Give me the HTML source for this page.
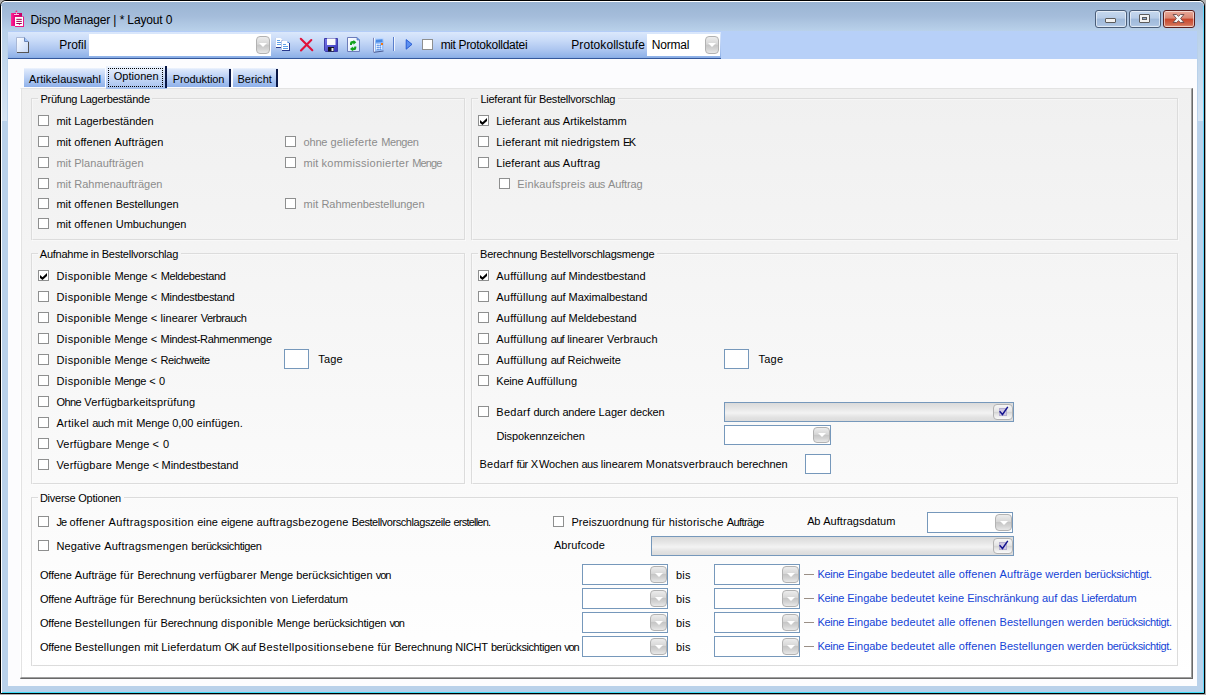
<!DOCTYPE html>
<html lang="de"><head><meta charset="utf-8"><title>Dispo Manager</title>
<style>
html,body{margin:0;padding:0}
body{width:1206px;height:695px;overflow:hidden;background:#b0b0b0;position:relative;font-family:"Liberation Sans",sans-serif}
*{box-sizing:border-box}
.a{position:absolute}
.tx{position:absolute;white-space:pre;line-height:16px;height:16px}
.w{display:inline-block;white-space:pre;overflow:visible;vertical-align:top}
.win{position:absolute;left:0;top:0;width:1205px;height:694px;background:#b9d1ea;border:1px solid #000;border-radius:6px 6px 0 0;overflow:hidden}
.cb{position:absolute;width:11px;height:11px;border:1px solid #8e8f8f;background:#fff}
.gl{position:absolute;background:#dcdcdc;box-shadow:1px 1px 0 rgba(255,255,255,.4)}
.inp{position:absolute;background:#fff;border:1px solid #7698bb}
.dd{position:absolute;border:1px solid #b2b2b2;border-radius:4px;background:linear-gradient(#ececec,#d6d6d6 46%,#c6c6c6 50%,#d4d4d4 75%,#e8e8e8)}
.dd i{position:absolute;left:50%;top:50%;margin:-2px 0 0 -4px;width:0;height:0;border-left:4px solid transparent;border-right:4px solid transparent;border-top:4px solid #fff}
.ck{position:absolute;border:1px solid #b2b2b2;border-radius:4px;background:linear-gradient(#f6f6f6,#e4e4e4 46%,#d2d2d2 50%,#e6e6e6 70%,#fafafa)}
.tab{position:absolute;background:linear-gradient(#f0f5fd,#dde8fb 8%,#b9cff4 50%,#8fb1ea)}
</style></head><body>

<div class="win"></div>
<div class="a" style="left:1px;top:1px;width:1203px;height:30px;background:linear-gradient(#9ab4d3,#a5bddb 50%,#b9d1ea);border-radius:5px 5px 0 0;border-top:1px solid #fff"></div>
<div class="a" style="left:1px;top:6px;width:1px;height:687px;background:#fff"></div>
<div class="a" style="left:1203px;top:6px;width:1px;height:687px;background:#5fd6fb"></div>
<div class="a" style="left:2px;top:692px;width:1202px;height:1px;background:#3fdcf7"></div>
<div class="a" style="left:2px;top:31px;width:5px;height:90px;background:linear-gradient(rgba(255,255,255,0),rgba(255,255,255,.42))"></div>
<div class="a" style="left:1198px;top:31px;width:5px;height:90px;background:linear-gradient(rgba(255,255,255,0),rgba(255,255,255,.42))"></div>
<div class="a" style="left:8px;top:31px;width:1189px;height:655px;background:#fcfcfe"></div>
<div class="a" style="left:8px;top:31px;width:1189px;height:28px;background:#b7d0f8"></div>
<div class="a" style="left:8px;top:31px;width:713px;height:28px;background:#b4cdf8;border-radius:3px 0 0 0"></div>
<div class="a" style="left:8px;top:32px;width:713px;height:27px;background:linear-gradient(#dbe8fc 0,#c9dbf8 30%,#adc6f0 65%,#8fb2e8 92.600%,#86aae4 96.200%,#34589b 96.400%,#34589b 100%)"></div>
<div class="a" style="left:89px;top:34px;width:182px;height:22px;background:#fff"></div>
<div class="dd" style="left:256px;top:36px;width:14px;height:18px"><i></i></div>
<div class="a" style="left:647px;top:34px;width:73px;height:22px;background:#fff"></div>
<div class="dd" style="left:705px;top:36px;width:14px;height:18px"><i></i></div>
<div class="cb" style="left:422px;top:39px"></div>
<svg class="a" style="left:15px;top:36px" width="16" height="18" viewBox="0 0 16 18"><defs><linearGradient id="pg" x1="0" y1="0" x2="1" y2="1"><stop offset="0" stop-color="#fff"/><stop offset="1" stop-color="#c5d8f8"/></linearGradient></defs><path d="M1.500 1.500h8l4 4v11h-12z" fill="url(#pg)" stroke="#a9b8d6" stroke-width="1"/><path d="M9.500 1.500v4h4" fill="#9cc4ff" stroke="#6d86b5" stroke-width="1"/><path d="M2 16.500h12M13.500 6v10.500" stroke="#555" stroke-width="1" fill="none"/></svg>
<svg class="a" style="left:275px;top:38px" width="16" height="14" viewBox="0 0 16 14"><path d="M.5 0h5l2 2v8h-7z" fill="#fff"/><path d="M.5 0v10" stroke="#c5d3ee" fill="none"/><path d="M1 9.500h6M7 2.500v7" stroke="#2a3b8f" fill="none"/><path d="M2 2.500h3M2 4.500h4M2 6.500h4" stroke="#5fa0e8"/><path d="M6.500 3h6l2 2v8h-8z" fill="#fff"/><path d="M6.500 3v10" stroke="#b5c7ea" fill="none"/><path d="M12.500 3l2 2h-2z" fill="#3d7fe0"/><path d="M7 12.500h8M14.500 5v8" stroke="#2a3b8f" fill="none"/><path d="M8 6.500h3M8 8.500h5M8 10.500h5" stroke="#5fa0e8"/></svg>
<svg class="a" style="left:299px;top:37px" width="15" height="15" viewBox="0 0 15 15"><path d="M1.800 1.800L13.300 13.200M12.300 3L2 13.500" stroke="#e0123a" stroke-width="2.100" stroke-linecap="round"/></svg>
<svg class="a" style="left:324px;top:38px" width="14" height="14" viewBox="0 0 14 14"><defs><linearGradient id="fl" x1="0" y1="0" x2="1" y2="1"><stop offset="0" stop-color="#7a7ae8"/><stop offset="1" stop-color="#3434b8"/></linearGradient></defs><path d="M.5.5h13v13h-12l-1-1z" fill="url(#fl)" stroke="#3c3ca8"/><rect x="3" y=".5" width="8.500" height="6.500" fill="#fafafa"/><rect x="4" y="9" width="6" height="4.500" fill="#16161e"/><rect x="7.500" y="10" width="2" height="3" fill="#f0f0f0"/></svg>
<svg class="a" style="left:347px;top:37px" width="14" height="15" viewBox="0 0 14 15"><defs><linearGradient id="rf" x1="0" y1="0" x2="1" y2="1"><stop offset="0" stop-color="#fff"/><stop offset="1" stop-color="#d4e4fc"/></linearGradient></defs><path d="M.5.5h9.500l2.500 2.500v11.500h-12z" fill="url(#rf)" stroke="#6d7cba"/><path d="M10 .5v2.500h2.500" fill="#4a9af0" stroke="#6d7cba" stroke-width=".8"/><path d="M3 8V6.200Q3 4 5.500 4H6.500V3L9.300 5.300L6.500 7.800V6.500H5.500Q5 6.500 5 7.200V8z" fill="#12a21c"/><path d="M9.300 9.500v1.600Q9.300 13.300 6.800 13.300H5.800v1L3 12L5.800 9.500v1.300h1Q7.300 10.800 7.300 10.100V9.500z" fill="#12a21c"/></svg>
<svg class="a" style="left:373px;top:37px" width="12" height="16" viewBox="0 0 12 16"><defs><linearGradient id="ca" x1="0" y1="0" x2="0" y2="1"><stop offset="0" stop-color="#cfe2ff"/><stop offset=".3" stop-color="#8cb8f6"/><stop offset="1" stop-color="#9fc2f6"/></linearGradient></defs><path d="M.5.800L10.500.2V14.200L.5 15.500z" fill="url(#ca)"/><path d="M.5.800V15.500" stroke="#8088b8"/><path d="M1.500 1V15" stroke="#eef4ff"/><path d="M1 15.300L10.500 14" stroke="#4a5a90"/><path d="M3 2.800L9.500 2.300V5L3 5.500z" fill="#4a8ae4"/><path d="M3.200 7.500h1.300M5.500 7.300h1.300M3.200 9.500h1.300M5.500 9.300h1.300M7.800 9.100h1.300M3.200 11.500h1.300M5.500 11.300h1.300M7.800 11.100h1.300" stroke="#fff" stroke-width="1.300"/><path d="M4.300 8.500h1.300M6.600 8.300h1.300M4.300 10.500h1.300M6.600 10.300h1.300M4.300 12.500h1.300M6.600 12.300h1.300" stroke="#4f86e0" stroke-width="1"/><rect x="8" y="6" width="2" height="2" fill="#f07818"/></svg>
<div class="a" style="left:393px;top:37px;width:1px;height:14px;background:#5a7fcc"></div><div class="a" style="left:394px;top:37px;width:1px;height:14px;background:#eef4fd"></div>
<svg class="a" style="left:405px;top:39px" width="8" height="11" viewBox="0 0 8 11"><path d="M1.200 .6L7 5.300L1.200 10.200z" fill="#5b8ff0" stroke="#1f55d0" stroke-width=".9"/></svg>
<svg class="a" style="left:11px;top:10px" width="14" height="18" viewBox="0 0 14 18"><defs><linearGradient id="cl" x1="0" y1="0" x2="1" y2="0"><stop offset="0" stop-color="#ff2a96"/><stop offset=".35" stop-color="#e6007a"/><stop offset="1" stop-color="#c20062"/></linearGradient></defs><rect x="0" y="3" width="11" height="13" fill="url(#cl)"/><circle cx="5.400" cy="1.500" r=".9" fill="#f0208a"/><path d="M5.500 2v2.500" stroke="#ff9ccc" stroke-width="1"/><path d="M3 4.500h5" stroke="#ffc4e2" stroke-width="1"/><rect x="4" y="6.500" width="9" height="10.500" fill="#ea1a86"/><rect x="4" y="7" width="8" height="9" fill="#fff"/><path d="M5.300 9.300h5.500M5.300 11.400h5.500M5.300 13.500h5.500" stroke="#a3004f" stroke-width="1"/><path d="M7.600 14h1.600l-.8 1z" fill="#a3004f"/></svg>
<div class="a" style="left:1095px;top:10px;width:32px;height:18px;border:1px solid #4a5d78;border-radius:3px;background:linear-gradient(#c6d8ee,#b7cce7 45%,#9fb9da 50%,#a9c1e0 85%,#bdd2ec);box-shadow:inset 0 0 0 1px rgba(255,255,255,.55)"></div>
<div class="a" style="left:1129px;top:10px;width:32px;height:18px;border:1px solid #4a5d78;border-radius:3px;background:linear-gradient(#c6d8ee,#b7cce7 45%,#9fb9da 50%,#a9c1e0 85%,#bdd2ec);box-shadow:inset 0 0 0 1px rgba(255,255,255,.55)"></div>
<div class="a" style="left:1163px;top:10px;width:32px;height:18px;border:1px solid #5a1e1e;border-radius:3px;background:linear-gradient(#e9a99a,#d98672 45%,#c8442a 50%,#d06a50 85%,#e89a80);box-shadow:inset 0 0 0 1px rgba(255,255,255,.55)"></div>
<div class="a" style="left:1105px;top:18px;width:11px;height:5px;background:#f2f2f2;border:1px solid #5c5c5c;border-radius:1px"></div>
<div class="a" style="left:1139px;top:14px;width:11px;height:9px;background:#f2f2f2;border:1px solid #5c5c5c;border-radius:1px"></div><div class="a" style="left:1142px;top:17px;width:5px;height:3px;background:#8ea8cc;border:1px solid #5c5c5c"></div>
<svg class="a" style="left:1172px;top:13px" width="13" height="11" viewBox="0 0 13 11"><path d="M1 1.500h3.600L6.500 3.300L8.400 1.500H12L8.600 5.500L12 9.500H8.400L6.500 7.700L4.600 9.500H1L4.400 5.500z" fill="#f6f6f6" stroke="#6a4a4a" stroke-width=".9" stroke-linejoin="round"/></svg>
<div class="a" style="left:20px;top:88px;width:1173px;height:591px;background:linear-gradient(#f0f0f0,#fff);border-left:1px solid #fff;border-top:1px solid #e3e3e3;border-right:2px solid #696969;border-bottom:2px solid #696969"></div>
<div class="a" style="left:21px;top:88px;width:1px;height:589px;background:#e3e3e3"></div>
<div class="a" style="left:1191px;top:89px;width:1px;height:589px;background:#a0a0a0"></div>
<div class="a" style="left:21px;top:677px;width:1171px;height:1px;background:#a0a0a0"></div>
<div class="tab" style="left:24px;top:68px;width:81px;height:19px"></div>
<div class="tab" style="left:106px;top:66px;width:61px;height:23px;background:linear-gradient(#eef4fe,#c9daf7 50%,#a3bfee)"></div>
<div class="a" style="left:165px;top:66px;width:2px;height:22px;background:#0a1848"></div>
<div class="a" style="left:108px;top:68px;width:55px;height:19px;border:1px dotted #000"></div>
<div class="tab" style="left:167px;top:68px;width:64px;height:19px"></div>
<div class="a" style="left:229px;top:69px;width:2px;height:18px;background:#0a1848"></div>
<div class="tab" style="left:233px;top:68px;width:45px;height:19px"></div>
<div class="a" style="left:276px;top:69px;width:2px;height:18px;background:#0a1848"></div>
<div class="gl" style="left:31px;top:98px;width:7px;height:1px"></div>
<div class="gl" style="left:152px;top:98px;width:313px;height:1px"></div>
<div class="gl" style="left:31px;top:239px;width:434px;height:1px"></div>
<div class="gl" style="left:31px;top:98px;width:1px;height:142px"></div>
<div class="gl" style="left:464px;top:98px;width:1px;height:142px"></div>
<div class="gl" style="left:471px;top:98px;width:7px;height:1px"></div>
<div class="gl" style="left:618px;top:98px;width:560px;height:1px"></div>
<div class="gl" style="left:471px;top:239px;width:707px;height:1px"></div>
<div class="gl" style="left:471px;top:98px;width:1px;height:142px"></div>
<div class="gl" style="left:1177px;top:98px;width:1px;height:142px"></div>
<div class="gl" style="left:31px;top:253px;width:7px;height:1px"></div>
<div class="gl" style="left:181px;top:253px;width:284px;height:1px"></div>
<div class="gl" style="left:31px;top:483px;width:434px;height:1px"></div>
<div class="gl" style="left:31px;top:253px;width:1px;height:231px"></div>
<div class="gl" style="left:464px;top:253px;width:1px;height:231px"></div>
<div class="gl" style="left:471px;top:253px;width:7px;height:1px"></div>
<div class="gl" style="left:657px;top:253px;width:521px;height:1px"></div>
<div class="gl" style="left:471px;top:483px;width:707px;height:1px"></div>
<div class="gl" style="left:471px;top:253px;width:1px;height:231px"></div>
<div class="gl" style="left:1177px;top:253px;width:1px;height:231px"></div>
<div class="gl" style="left:31px;top:497px;width:7px;height:1px"></div>
<div class="gl" style="left:124px;top:497px;width:1054px;height:1px"></div>
<div class="gl" style="left:31px;top:665px;width:1147px;height:1px"></div>
<div class="gl" style="left:31px;top:497px;width:1px;height:169px"></div>
<div class="gl" style="left:1177px;top:497px;width:1px;height:169px"></div>
<div class="inp" style="left:284px;top:349px;width:25px;height:20px"></div>
<div class="inp" style="left:724px;top:349px;width:25px;height:20px"></div>
<div class="inp" style="left:805px;top:454px;width:26px;height:20px"></div>
<div class="inp" style="left:724px;top:402px;width:290px;height:20px;background:linear-gradient(#dadada,#e6e6e6 30%,#f3f3f3 55%,#e2e2e2 80%,#dcdcdc)"></div>
<div class="ck" style="left:993px;top:404px;width:20px;height:16px"></div>
<svg class="a" style="left:998px;top:405px" width="12" height="13" viewBox="0 0 12 13"><rect x="1.500" y="3.500" width="7" height="7" fill="#cfc8e2" stroke="#b4aed0"/><path d="M1.600 6.200l2.900 3.300L9.800 1.800" fill="none" stroke="#12128e" stroke-width="1.400"/></svg>
<div class="inp" style="left:724px;top:425px;width:107px;height:20px;background:#fff"></div>
<div class="dd" style="left:813px;top:427px;width:17px;height:16px"><i></i></div>
<div class="inp" style="left:927px;top:512px;width:86px;height:21px;background:#fff"></div>
<div class="dd" style="left:995px;top:514px;width:17px;height:17px"><i></i></div>
<div class="inp" style="left:651px;top:536px;width:363px;height:20px;background:linear-gradient(#dadada,#e6e6e6 30%,#f3f3f3 55%,#e2e2e2 80%,#dcdcdc)"></div>
<div class="ck" style="left:993px;top:538px;width:20px;height:16px"></div>
<svg class="a" style="left:998px;top:539px" width="12" height="13" viewBox="0 0 12 13"><rect x="1.500" y="3.500" width="7" height="7" fill="#cfc8e2" stroke="#b4aed0"/><path d="M1.600 6.200l2.900 3.300L9.800 1.800" fill="none" stroke="#12128e" stroke-width="1.400"/></svg>
<div class="inp" style="left:582px;top:564px;width:86px;height:21px;background:#fff"></div>
<div class="dd" style="left:650px;top:566px;width:17px;height:17px"><i></i></div>
<div class="inp" style="left:714px;top:564px;width:86px;height:21px;background:#fff"></div>
<div class="dd" style="left:782px;top:566px;width:17px;height:17px"><i></i></div>
<div class="a" style="left:804px;top:574px;width:10px;height:1px;background:#9a8f86"></div>
<div class="inp" style="left:582px;top:588px;width:86px;height:21px;background:#fff"></div>
<div class="dd" style="left:650px;top:590px;width:17px;height:17px"><i></i></div>
<div class="inp" style="left:714px;top:588px;width:86px;height:21px;background:#fff"></div>
<div class="dd" style="left:782px;top:590px;width:17px;height:17px"><i></i></div>
<div class="a" style="left:804px;top:598px;width:10px;height:1px;background:#9a8f86"></div>
<div class="inp" style="left:582px;top:612px;width:86px;height:21px;background:#fff"></div>
<div class="dd" style="left:650px;top:614px;width:17px;height:17px"><i></i></div>
<div class="inp" style="left:714px;top:612px;width:86px;height:21px;background:#fff"></div>
<div class="dd" style="left:782px;top:614px;width:17px;height:17px"><i></i></div>
<div class="a" style="left:804px;top:622px;width:10px;height:1px;background:#9a8f86"></div>
<div class="inp" style="left:582px;top:636px;width:86px;height:21px;background:#fff"></div>
<div class="dd" style="left:650px;top:638px;width:17px;height:17px"><i></i></div>
<div class="inp" style="left:714px;top:636px;width:86px;height:21px;background:#fff"></div>
<div class="dd" style="left:782px;top:638px;width:17px;height:17px"><i></i></div>
<div class="a" style="left:804px;top:646px;width:10px;height:1px;background:#9a8f86"></div>
<div class="cb" style="left:38px;top:115px"></div>
<div class="cb" style="left:38px;top:136px"></div>
<div class="cb d" style="left:38px;top:157px"></div>
<div class="cb d" style="left:38px;top:178px"></div>
<div class="cb" style="left:38px;top:198px"></div>
<div class="cb" style="left:38px;top:218px"></div>
<div class="cb d" style="left:285px;top:136px"></div>
<div class="cb d" style="left:285px;top:157px"></div>
<div class="cb d" style="left:285px;top:198px"></div>
<div class="cb" style="left:478px;top:115px"></div>
<svg class="a" style="left:478px;top:115px" width="11" height="11" viewBox="0 0 11 11"><path d="M2 5L4.500 7.200L9 2.900V5.900L4.500 10.100L2 8Z" fill="#000"/></svg>
<div class="cb" style="left:478px;top:136px"></div>
<div class="cb" style="left:478px;top:157px"></div>
<div class="cb d" style="left:499px;top:178px"></div>
<div class="cb" style="left:38px;top:270px"></div>
<svg class="a" style="left:38px;top:270px" width="11" height="11" viewBox="0 0 11 11"><path d="M2 5L4.500 7.200L9 2.900V5.900L4.500 10.100L2 8Z" fill="#000"/></svg>
<div class="cb" style="left:38px;top:291px"></div>
<div class="cb" style="left:38px;top:312px"></div>
<div class="cb" style="left:38px;top:333px"></div>
<div class="cb" style="left:38px;top:354px"></div>
<div class="cb" style="left:38px;top:375px"></div>
<div class="cb" style="left:38px;top:396px"></div>
<div class="cb" style="left:38px;top:417px"></div>
<div class="cb" style="left:38px;top:438px"></div>
<div class="cb" style="left:38px;top:459px"></div>
<div class="cb" style="left:478px;top:270px"></div>
<svg class="a" style="left:478px;top:270px" width="11" height="11" viewBox="0 0 11 11"><path d="M2 5L4.500 7.200L9 2.900V5.900L4.500 10.100L2 8Z" fill="#000"/></svg>
<div class="cb" style="left:478px;top:291px"></div>
<div class="cb" style="left:478px;top:312px"></div>
<div class="cb" style="left:478px;top:333px"></div>
<div class="cb" style="left:478px;top:354px"></div>
<div class="cb" style="left:478px;top:375px"></div>
<div class="cb" style="left:478px;top:406px"></div>
<div class="cb" style="left:38px;top:516px"></div>
<div class="cb" style="left:38px;top:540px"></div>
<div class="cb" style="left:553px;top:516px"></div>
<span class="tx" style="left:30.4px;top:11.7px;font-size:12px;color:#000"><span class="w" style="width:33.4px;letter-spacing:-0.098px">Dispo </span><span class="w" style="width:49.5px;letter-spacing:-0.154px">Manager </span><span class="w" style="width:6.4px;letter-spacing:0.075px">| </span><span class="w" style="width:7.7px;letter-spacing:-0.172px">* </span><span class="w" style="width:38.4px;letter-spacing:-0.139px">Layout </span><span class="w" style="letter-spacing:0.012px">0</span></span>
<span class="tx" style="left:59.3px;top:36.7px;font-size:12px;color:#000;letter-spacing:-0.049px">Profil</span>
<span class="tx" style="left:440.8px;top:36.7px;font-size:12px;color:#000"><span class="w" style="width:17.6px;letter-spacing:-0.533px">mit </span><span class="w" style="letter-spacing:-0.266px">Protokolldatei</span></span>
<span class="tx" style="left:571.3px;top:36.7px;font-size:12px;color:#000;letter-spacing:0.069px">Protokollstufe</span>
<span class="tx" style="left:651.7px;top:36.7px;font-size:12px;color:#000;letter-spacing:-0.194px">Normal</span>
<span class="tx" style="left:29.0px;top:71.0px;font-size:11px;color:#000;letter-spacing:0.083px">Artikelauswahl</span>
<span class="tx" style="left:113.8px;top:68.2px;font-size:11px;color:#000;letter-spacing:0.021px">Optionen</span>
<span class="tx" style="left:172.7px;top:71.0px;font-size:11px;color:#000;letter-spacing:-0.088px">Produktion</span>
<span class="tx" style="left:237.4px;top:71.0px;font-size:11px;color:#000;letter-spacing:0.042px">Bericht</span>
<span class="tx" style="left:40.5px;top:90.7px;font-size:11px;color:#000;letter-spacing:-0.274px">Prüfung Lagerbestände</span>
<span class="tx" style="left:480.4px;top:90.7px;font-size:11px;color:#000;letter-spacing:-0.233px">Lieferant für Bestellvorschlag</span>
<span class="tx" style="left:39.8px;top:245.7px;font-size:11px;color:#000;letter-spacing:-0.238px">Aufnahme in Bestellvorschlag</span>
<span class="tx" style="left:480.1px;top:245.7px;font-size:11px;color:#000;letter-spacing:-0.222px">Berechnung Bestellvorschlagsmenge</span>
<span class="tx" style="left:39.9px;top:489.7px;font-size:11px;color:#000;letter-spacing:-0.247px">Diverse Optionen</span>
<span class="tx" style="left:56.5px;top:112.7px;font-size:11px;color:#000"><span class="w" style="width:17.7px;letter-spacing:-0.057px">mit </span><span class="w" style="letter-spacing:-0.008px">Lagerbeständen</span></span>
<span class="tx" style="left:56.5px;top:133.7px;font-size:11px;color:#000"><span class="w" style="width:17.7px;letter-spacing:-0.057px">mit </span><span class="w" style="width:40.3px;letter-spacing:0.083px">offenen </span><span class="w" style="letter-spacing:0.144px">Aufträgen</span></span>
<span class="tx" style="left:56.5px;top:154.7px;font-size:11px;color:#8c8c8c"><span class="w" style="width:17.7px;letter-spacing:-0.057px">mit </span><span class="w" style="letter-spacing:0.069px">Planaufträgen</span></span>
<span class="tx" style="left:56.5px;top:175.7px;font-size:11px;color:#8c8c8c"><span class="w" style="width:17.7px;letter-spacing:-0.057px">mit </span><span class="w" style="letter-spacing:0.016px">Rahmenaufträgen</span></span>
<span class="tx" style="left:56.5px;top:195.7px;font-size:11px;color:#000"><span class="w" style="width:17.7px;letter-spacing:-0.057px">mit </span><span class="w" style="width:41.6px;letter-spacing:0.269px">offenen </span><span class="w" style="letter-spacing:-0.076px">Bestellungen</span></span>
<span class="tx" style="left:56.5px;top:215.7px;font-size:11px;color:#000"><span class="w" style="width:17.7px;letter-spacing:-0.057px">mit </span><span class="w" style="width:41.6px;letter-spacing:0.269px">offenen </span><span class="w" style="letter-spacing:-0.087px">Umbuchungen</span></span>
<span class="tx" style="left:303.6px;top:133.7px;font-size:11px;color:#8c8c8c"><span class="w" style="width:26.8px;letter-spacing:-0.221px">ohne </span><span class="w" style="width:50.8px;letter-spacing:0.233px">gelieferte </span><span class="w" style="letter-spacing:-0.411px">Mengen</span></span>
<span class="tx" style="left:303.6px;top:154.7px;font-size:11px;color:#8c8c8c"><span class="w" style="width:17.9px;letter-spacing:0.009px">mit </span><span class="w" style="width:90.8px;letter-spacing:0.279px">kommissionierter </span><span class="w" style="letter-spacing:-0.868px">Menge</span></span>
<span class="tx" style="left:303.6px;top:195.7px;font-size:11px;color:#8c8c8c"><span class="w" style="width:17.9px;letter-spacing:0.009px">mit </span><span class="w" style="letter-spacing:-0.054px">Rahmenbestellungen</span></span>
<span class="tx" style="left:496.2px;top:112.7px;font-size:11px;color:#000"><span class="w" style="width:47.2px;letter-spacing:0.132px">Lieferant </span><span class="w" style="width:19.4px;letter-spacing:-0.517px">aus </span><span class="w" style="letter-spacing:0.028px">Artikelstamm</span></span>
<span class="tx" style="left:496.2px;top:133.7px;font-size:11px;color:#000"><span class="w" style="width:47.9px;letter-spacing:0.210px">Lieferant </span><span class="w" style="width:17.2px;letter-spacing:-0.224px">mit </span><span class="w" style="width:61.7px;letter-spacing:0.149px">niedrigstem </span><span class="w" style="letter-spacing:-1.544px">EK</span></span>
<span class="tx" style="left:496.2px;top:154.7px;font-size:11px;color:#000"><span class="w" style="width:47.2px;letter-spacing:0.132px">Lieferant </span><span class="w" style="width:19.4px;letter-spacing:-0.517px">aus </span><span class="w" style="letter-spacing:0.333px">Auftrag</span></span>
<span class="tx" style="left:517.3px;top:175.7px;font-size:11px;color:#8c8c8c"><span class="w" style="width:71.3px;letter-spacing:0.158px">Einkaufspreis </span><span class="w" style="width:19.4px;letter-spacing:-0.517px">aus </span><span class="w" style="letter-spacing:-0.153px">Auftrag</span></span>
<span class="tx" style="left:56.6px;top:267.7px;font-size:11px;color:#000"><span class="w" style="width:57.8px;letter-spacing:0.323px">Disponible </span><span class="w" style="width:36.3px;letter-spacing:-0.108px">Menge </span><span class="w" style="width:10.0px;letter-spacing:0.363px">&lt; </span><span class="w" style="letter-spacing:-0.367px">Meldebestand</span></span>
<span class="tx" style="left:56.6px;top:288.7px;font-size:11px;color:#000"><span class="w" style="width:57.8px;letter-spacing:0.323px">Disponible </span><span class="w" style="width:36.3px;letter-spacing:-0.108px">Menge </span><span class="w" style="width:10.0px;letter-spacing:0.363px">&lt; </span><span class="w" style="letter-spacing:-0.284px">Mindestbestand</span></span>
<span class="tx" style="left:56.6px;top:309.7px;font-size:11px;color:#000"><span class="w" style="width:57.8px;letter-spacing:0.323px">Disponible </span><span class="w" style="width:36.3px;letter-spacing:-0.108px">Menge </span><span class="w" style="width:9.9px;letter-spacing:0.263px">&lt; </span><span class="w" style="width:40.1px;letter-spacing:0.027px">linearer </span><span class="w" style="letter-spacing:-0.484px">Verbrauch</span></span>
<span class="tx" style="left:56.6px;top:330.7px;font-size:11px;color:#000"><span class="w" style="width:57.8px;letter-spacing:0.323px">Disponible </span><span class="w" style="width:36.3px;letter-spacing:-0.108px">Menge </span><span class="w" style="width:9.9px;letter-spacing:0.263px">&lt; </span><span class="w" style="letter-spacing:-0.331px">Mindest-Rahmenmenge</span></span>
<span class="tx" style="left:56.6px;top:351.7px;font-size:11px;color:#000"><span class="w" style="width:57.8px;letter-spacing:0.323px">Disponible </span><span class="w" style="width:36.3px;letter-spacing:-0.108px">Menge </span><span class="w" style="width:9.9px;letter-spacing:0.263px">&lt; </span><span class="w" style="letter-spacing:-0.471px">Reichweite</span></span>
<span class="tx" style="left:56.6px;top:372.7px;font-size:11px;color:#000"><span class="w" style="width:57.8px;letter-spacing:0.323px">Disponible </span><span class="w" style="width:34.8px;letter-spacing:-0.408px">Menge </span><span class="w" style="width:9.9px;letter-spacing:0.263px">&lt; </span><span class="w" style="letter-spacing:-1.725px">0</span></span>
<span class="tx" style="left:56.6px;top:393.7px;font-size:11px;color:#000"><span class="w" style="width:27.7px;letter-spacing:-0.605px">Ohne </span><span class="w" style="letter-spacing:0.165px">Verfügbarkeitsprüfung</span></span>
<span class="tx" style="left:56.4px;top:414.7px;font-size:11px;color:#000"><span class="w" style="width:35.9px;letter-spacing:0.305px">Artikel </span><span class="w" style="width:24.8px;letter-spacing:-0.565px">auch </span><span class="w" style="width:19.1px;letter-spacing:0.409px">mit </span><span class="w" style="width:36.2px;letter-spacing:-0.128px">Menge </span><span class="w" style="width:24.1px;letter-spacing:-0.130px">0,00 </span><span class="w" style="letter-spacing:0.137px">einfügen.</span></span>
<span class="tx" style="left:56.4px;top:435.7px;font-size:11px;color:#000"><span class="w" style="width:59.0px;letter-spacing:0.197px">Verfügbare </span><span class="w" style="width:37.2px;letter-spacing:0.072px">Menge </span><span class="w" style="width:10.3px;letter-spacing:0.663px">&lt; </span><span class="w" style="letter-spacing:-1.425px">0</span></span>
<span class="tx" style="left:56.4px;top:456.7px;font-size:11px;color:#000"><span class="w" style="width:59.0px;letter-spacing:0.197px">Verfügbare </span><span class="w" style="width:37.2px;letter-spacing:0.072px">Menge </span><span class="w" style="width:9.0px;letter-spacing:-0.637px">&lt; </span><span class="w" style="letter-spacing:-0.062px">Mindestbestand</span></span>
<span class="tx" style="left:318.2px;top:350.7px;font-size:11px;color:#000;letter-spacing:0.214px">Tage</span>
<span class="tx" style="left:496.2px;top:267.7px;font-size:11px;color:#000"><span class="w" style="width:54.5px;letter-spacing:0.257px">Auffüllung </span><span class="w" style="width:17.9px;letter-spacing:-0.199px">auf </span><span class="w" style="letter-spacing:-0.055px">Mindestbestand</span></span>
<span class="tx" style="left:496.2px;top:288.7px;font-size:11px;color:#000"><span class="w" style="width:54.5px;letter-spacing:0.257px">Auffüllung </span><span class="w" style="width:17.9px;letter-spacing:-0.199px">auf </span><span class="w" style="letter-spacing:-0.092px">Maximalbestand</span></span>
<span class="tx" style="left:496.2px;top:309.7px;font-size:11px;color:#000"><span class="w" style="width:54.5px;letter-spacing:0.257px">Auffüllung </span><span class="w" style="width:17.9px;letter-spacing:-0.199px">auf </span><span class="w" style="letter-spacing:-0.101px">Meldebestand</span></span>
<span class="tx" style="left:496.2px;top:330.7px;font-size:11px;color:#000"><span class="w" style="width:54.5px;letter-spacing:0.257px">Auffüllung </span><span class="w" style="width:16.5px;letter-spacing:-0.666px">auf </span><span class="w" style="width:39.7px;letter-spacing:-0.023px">linearer </span><span class="w" style="letter-spacing:0.060px">Verbrauch</span></span>
<span class="tx" style="left:496.2px;top:351.7px;font-size:11px;color:#000"><span class="w" style="width:54.5px;letter-spacing:0.257px">Auffüllung </span><span class="w" style="width:16.9px;letter-spacing:-0.532px">auf </span><span class="w" style="letter-spacing:-0.061px">Reichweite</span></span>
<span class="tx" style="left:496.3px;top:372.7px;font-size:11px;color:#000"><span class="w" style="width:30.3px;letter-spacing:-0.208px">Keine </span><span class="w" style="letter-spacing:0.197px">Auffüllung</span></span>
<span class="tx" style="left:758.5px;top:350.7px;font-size:11px;color:#000;letter-spacing:0.214px">Tage</span>
<span class="tx" style="left:496.3px;top:403.7px;font-size:11px;color:#000"><span class="w" style="width:37.2px;letter-spacing:0.263px">Bedarf </span><span class="w" style="width:29.0px;letter-spacing:-0.346px">durch </span><span class="w" style="width:36.1px;letter-spacing:-0.228px">andere </span><span class="w" style="width:31.5px;letter-spacing:0.032px">Lager </span><span class="w" style="letter-spacing:-0.197px">decken</span></span>
<span class="tx" style="left:496.4px;top:427.7px;font-size:11px;color:#000;letter-spacing:-0.099px">Dispokennzeichen</span>
<span class="tx" style="left:479.5px;top:455.7px;font-size:11px;color:#000"><span class="w" style="width:37.0px;letter-spacing:0.230px">Bedarf </span><span class="w" style="width:14.2px;letter-spacing:-0.615px">für </span><span class="w" style="width:8.3px;letter-spacing:-2.244px">X </span><span class="w" style="width:42.6px;letter-spacing:-0.126px">Wochen </span><span class="w" style="width:19.2px;letter-spacing:-0.583px">aus </span><span class="w" style="width:45.1px;letter-spacing:-0.036px">linearem </span><span class="w" style="width:90.9px;letter-spacing:0.180px">Monatsverbrauch </span><span class="w" style="letter-spacing:-0.144px">berechnen</span></span>
<span class="tx" style="left:56.4px;top:513.7px;font-size:11px;color:#000"><span class="w" style="width:13.0px;letter-spacing:-0.912px">Je </span><span class="w" style="width:39.1px;letter-spacing:0.262px">offener </span><span class="w" style="width:88.8px;letter-spacing:0.419px">Auftragsposition </span><span class="w" style="width:23.8px;letter-spacing:-0.049px">eine </span><span class="w" style="width:35.4px;letter-spacing:-0.141px">eigene </span><span class="w" style="width:95.4px;letter-spacing:0.258px">auftragsbezogene </span><span class="w" style="width:101.7px;letter-spacing:-0.442px">Bestellvorschlagszeile </span><span class="w" style="letter-spacing:-0.794px">erstellen.</span></span>
<span class="tx" style="left:56.4px;top:537.7px;font-size:11px;color:#000"><span class="w" style="width:47.8px;letter-spacing:0.147px">Negative </span><span class="w" style="width:87.1px;letter-spacing:0.227px">Auftragsmengen </span><span class="w" style="letter-spacing:-0.423px">berücksichtigen</span></span>
<span class="tx" style="left:571.5px;top:513.7px;font-size:11px;color:#000"><span class="w" style="width:80.5px;letter-spacing:0.017px">Preiszuordnung </span><span class="w" style="width:16.7px;letter-spacing:0.219px">für </span><span class="w" style="width:58.0px;letter-spacing:0.202px">historische </span><span class="w" style="letter-spacing:-0.562px">Aufträge</span></span>
<span class="tx" style="left:807.2px;top:512.7px;font-size:11px;color:#000"><span class="w" style="width:16.0px;letter-spacing:-0.334px">Ab </span><span class="w" style="letter-spacing:0.050px">Auftragsdatum</span></span>
<span class="tx" style="left:553.9px;top:536.7px;font-size:11px;color:#000;letter-spacing:0.093px">Abrufcode</span>
<span class="tx" style="left:39.9px;top:566.7px;font-size:11px;color:#000"><span class="w" style="width:34.9px;letter-spacing:-0.188px">Offene </span><span class="w" style="width:45.2px;letter-spacing:0.051px">Aufträge </span><span class="w" style="width:17.5px;letter-spacing:0.485px">für </span><span class="w" style="width:61.2px;letter-spacing:-0.133px">Berechnung </span><span class="w" style="width:61.4px;letter-spacing:0.176px">verfügbarer </span><span class="w" style="width:36.1px;letter-spacing:-0.148px">Menge </span><span class="w" style="width:79.6px;letter-spacing:-0.002px">berücksichtigen </span><span class="w" style="letter-spacing:-1.050px">von</span></span>
<span class="tx" style="left:676.0px;top:566.7px;font-size:11px;color:#000;letter-spacing:0.219px">bis</span>
<span class="tx" style="left:39.9px;top:590.7px;font-size:11px;color:#000"><span class="w" style="width:34.9px;letter-spacing:-0.188px">Offene </span><span class="w" style="width:45.2px;letter-spacing:0.051px">Aufträge </span><span class="w" style="width:17.5px;letter-spacing:0.485px">für </span><span class="w" style="width:61.2px;letter-spacing:-0.133px">Berechnung </span><span class="w" style="width:71.3px;letter-spacing:0.017px">berücksichten </span><span class="w" style="width:21.6px;letter-spacing:0.217px">von </span><span class="w" style="letter-spacing:-0.181px">Lieferdatum</span></span>
<span class="tx" style="left:676.0px;top:590.7px;font-size:11px;color:#000;letter-spacing:0.219px">bis</span>
<span class="tx" style="left:39.9px;top:614.7px;font-size:11px;color:#000"><span class="w" style="width:34.9px;letter-spacing:-0.188px">Offene </span><span class="w" style="width:69.1px;letter-spacing:0.191px">Bestellungen </span><span class="w" style="width:16.7px;letter-spacing:0.219px">für </span><span class="w" style="width:60.4px;letter-spacing:-0.213px">Berechnung </span><span class="w" style="width:55.8px;letter-spacing:0.305px">disponible </span><span class="w" style="width:36.4px;letter-spacing:-0.088px">Menge </span><span class="w" style="width:76.3px;letter-spacing:-0.222px">berücksichtigen </span><span class="w" style="letter-spacing:-1.183px">von</span></span>
<span class="tx" style="left:676.0px;top:614.7px;font-size:11px;color:#000;letter-spacing:0.219px">bis</span>
<span class="tx" style="left:39.9px;top:638.7px;font-size:11px;color:#000"><span class="w" style="width:34.9px;letter-spacing:-0.188px">Offene </span><span class="w" style="width:69.1px;letter-spacing:0.191px">Bestellungen </span><span class="w" style="width:17.4px;letter-spacing:-0.157px">mit </span><span class="w" style="width:63.2px;letter-spacing:0.173px">Lieferdatum </span><span class="w" style="width:16.9px;letter-spacing:-1.103px">OK </span><span class="w" style="width:17.5px;letter-spacing:-0.332px">auf </span><span class="w" style="width:118.7px;letter-spacing:0.403px">Bestellpositionsebene </span><span class="w" style="width:16.9px;letter-spacing:0.285px">für </span><span class="w" style="width:60.9px;letter-spacing:-0.163px">Berechnung </span><span class="w" style="width:35.6px;letter-spacing:-0.242px">NICHT </span><span class="w" style="width:73.4px;letter-spacing:-0.416px">berücksichtigen </span><span class="w" style="letter-spacing:-1.217px">von</span></span>
<span class="tx" style="left:676.0px;top:638.7px;font-size:11px;color:#000;letter-spacing:0.219px">bis</span>
<span class="tx" style="left:817.4px;top:565.7px;font-size:11px;color:#1443d6"><span class="w" style="width:29.9px;letter-spacing:-0.288px">Keine </span><span class="w" style="width:43.5px;letter-spacing:-0.011px">Eingabe </span><span class="w" style="width:47.2px;letter-spacing:0.146px">bedeutet </span><span class="w" style="width:20.7px;letter-spacing:0.094px">alle </span><span class="w" style="width:40.8px;letter-spacing:0.155px">offenen </span><span class="w" style="width:45.9px;letter-spacing:0.138px">Aufträge </span><span class="w" style="width:39.2px;letter-spacing:-0.013px">werden </span><span class="w" style="letter-spacing:-0.207px">berücksichtigt.</span></span>
<span class="tx" style="left:817.4px;top:589.7px;font-size:11px;color:#1443d6"><span class="w" style="width:29.9px;letter-spacing:-0.288px">Keine </span><span class="w" style="width:43.5px;letter-spacing:-0.011px">Eingabe </span><span class="w" style="width:47.2px;letter-spacing:0.146px">bedeutet </span><span class="w" style="width:29.2px;letter-spacing:-0.059px">keine </span><span class="w" style="width:74.8px;letter-spacing:-0.091px">Einschränkung </span><span class="w" style="width:18.6px;letter-spacing:0.034px">auf </span><span class="w" style="width:20.6px;letter-spacing:-0.117px">das </span><span class="w" style="letter-spacing:-0.263px">Lieferdatum</span></span>
<span class="tx" style="left:817.4px;top:613.7px;font-size:11px;color:#1443d6"><span class="w" style="width:29.9px;letter-spacing:-0.288px">Keine </span><span class="w" style="width:43.5px;letter-spacing:-0.011px">Eingabe </span><span class="w" style="width:47.2px;letter-spacing:0.146px">bedeutet </span><span class="w" style="width:20.7px;letter-spacing:0.094px">alle </span><span class="w" style="width:40.8px;letter-spacing:0.155px">offenen </span><span class="w" style="width:67.9px;letter-spacing:0.091px">Bestellungen </span><span class="w" style="width:39.6px;letter-spacing:0.054px">werden </span><span class="w" style="letter-spacing:-0.374px">berücksichtigt.</span></span>
<span class="tx" style="left:817.4px;top:637.7px;font-size:11px;color:#1443d6"><span class="w" style="width:29.9px;letter-spacing:-0.288px">Keine </span><span class="w" style="width:43.5px;letter-spacing:-0.011px">Eingabe </span><span class="w" style="width:47.2px;letter-spacing:0.146px">bedeutet </span><span class="w" style="width:20.7px;letter-spacing:0.094px">alle </span><span class="w" style="width:40.8px;letter-spacing:0.155px">offenen </span><span class="w" style="width:67.9px;letter-spacing:0.091px">Bestellungen </span><span class="w" style="width:39.6px;letter-spacing:0.054px">werden </span><span class="w" style="letter-spacing:-0.374px">berücksichtigt.</span></span>
</body></html>
